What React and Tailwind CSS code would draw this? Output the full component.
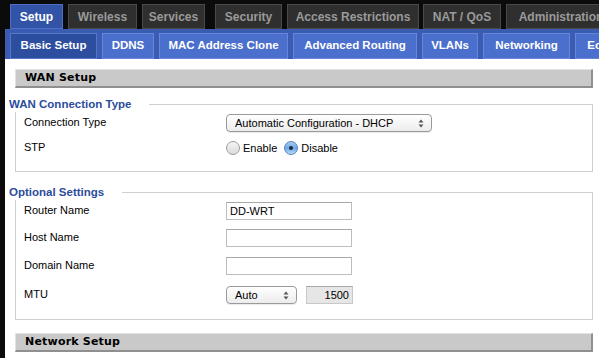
import React from 'react';

const mainTabs = [
  { label: 'Setup', w: 'w-[53px]', ml: 'ml-[10px]', active: true },
  { label: 'Wireless', w: 'w-[69px]', ml: 'ml-[5px]' },
  { label: 'Services', w: 'w-[63px]', ml: 'ml-[5px]' },
  { label: 'Security', w: 'w-[67px]', ml: 'ml-[10px]' },
  { label: 'Access Restrictions', w: 'w-[132px]', ml: 'ml-[5px]' },
  { label: 'NAT / QoS', w: 'w-[78px]', ml: 'ml-[4px]' },
  { label: 'Administration', w: 'w-[110px]', ml: 'ml-[5px]' },
];

const subTabs = [
  { label: 'Basic Setup', w: 'w-[87px]', active: true },
  { label: 'DDNS', w: 'w-[52px]' },
  { label: 'MAC Address Clone', w: 'w-[129px]' },
  { label: 'Advanced Routing', w: 'w-[124px]' },
  { label: 'VLANs', w: 'w-[56px]' },
  { label: 'Networking', w: 'w-[87px]' },
  { label: 'EoIP Tunnel', w: 'w-[90px]' },
];

const SectionHeader = ({ children }) => (
  <div className="h-[19px] bg-[#c9c9c9] border-t border-l border-[#e2e2e2] border-b-2 border-r-2 border-b-[#8f8f8f] border-r-[#8f8f8f] pl-[9px] flex items-center">
    <span className="font-['DejaVu_Sans'] font-bold text-[11px] tracking-[0.2px] text-black">{children}</span>
  </div>
);

const Fieldset = ({ legend, className, children }) => (
  <div className={`border border-[#cfcfcf] ${className}`}>
    <div className="-mt-[8px] -ml-[7px] w-fit bg-white pr-[18px] h-[15px] flex items-center">
      <span className="text-[11.5px] font-bold text-[#2b4c9c]">{legend}</span>
    </div>
    {children}
  </div>
);

const Row = ({ label, className, children }) => (
  <div className={`flex items-center h-[18px] pl-[8px] ${className}`}>
    <div className="w-[202px] text-[11px] text-black -mt-[2px]">{label}</div>
    {children}
  </div>
);

const SelectArrows = () => (
  <svg width="6" height="9" viewBox="0 0 6 9" className="shrink-0">
    <path d="M3 0.5 L5.5 3.5 H0.5 Z" fill="#555" />
    <path d="M3 8.5 L5.5 5.5 H0.5 Z" fill="#555" />
  </svg>
);

const MacSelect = ({ value, w }) => (
  <div className={`${w} h-[18px] rounded-[4px] border border-[#9a9a9a] bg-gradient-to-b from-white to-[#ececec] shadow-[0_1px_0_rgba(0,0,0,0.08)] flex items-center justify-between pl-[8px] pr-[7px]`}>
    <span className="text-[11px] text-black leading-none">{value}</span>
    <SelectArrows />
  </div>
);

const TextBox = ({ value, className = '' }) => (
  <div className={`h-[18px] border border-[#bdbdbd] border-t-[#a8a8a8] flex items-center text-[11px] text-black ${className}`}>
    {value}
  </div>
);

const Radio = ({ checked, label }) => (
  <div className="flex items-center gap-[3px]">
    {checked ? (
      <div className="w-[14px] h-[14px] rounded-full border border-[#5a7fb8] bg-gradient-to-b from-[#a9cdf3] via-[#6aa6e6] to-[#b9dbfa] flex items-center justify-center">
        <div className="w-[4px] h-[4px] rounded-full bg-[#1d2a3a]" />
      </div>
    ) : (
      <div className="w-[14px] h-[14px] rounded-full border border-[#9c9c9c] bg-gradient-to-b from-[#f4f4f4] to-[#dcdcdc]" />
    )}
    <span className="text-[11px] text-black">{label}</span>
  </div>
);

export default function App() {
  return (
    <div className="w-[599px] h-[358px] bg-[#0b0b0b] overflow-hidden font-['Liberation_Sans',sans-serif]">
      {/* main tabs */}
      <div className="flex pt-[4px] h-[29px] whitespace-nowrap">
        {mainTabs.map((t) => (
          <div
            key={t.label}
            className={`${t.w} ${t.ml} shrink-0 h-[25px] flex items-center justify-center text-[12px] font-bold border ${
              t.active
                ? 'bg-[#3253a6] border-[#4d6fc4] text-white'
                : 'bg-[#2f2f2f] border-[#4a4a4a] text-[#9a9a9a]'
            }`}
          >
            {t.label}
          </div>
        ))}
      </div>

      {/* sub tabs */}
      <div className="ml-[5px] h-[30px] bg-[#3a5db3] pt-[4px] pl-[5px] flex gap-[5px] whitespace-nowrap overflow-hidden">
        {subTabs.map((t) => (
          <div
            key={t.label}
            className={`${t.w} shrink-0 h-[26px] flex items-center justify-center text-[11.5px] font-bold text-white border ${
              t.active ? 'bg-[#2d4e9f] border-[#5676c8]' : 'bg-[#4b6fcc] border-[#6686d9]'
            }`}
          >
            {t.label}
          </div>
        ))}
      </div>

      {/* content */}
      <div className="ml-[5px] bg-white h-[299px] pt-[10px] pl-[10px] pr-[6px]">
        <SectionHeader>WAN Setup</SectionHeader>

        <Fieldset legend="WAN Connection Type" className="mt-[16px] pb-[14px]">
          <Row label="Connection Type" className="mt-[2px]">
            <MacSelect value="Automatic Configuration - DHCP" w="w-[206px]" />
          </Row>
          <Row label="STP" className="mt-[7px]">
            <div className="flex items-center gap-[7px]">
              <Radio label="Enable" />
              <Radio checked label="Disable" />
            </div>
          </Row>
        </Fieldset>

        <Fieldset legend="Optional Settings" className="mt-[20px] pb-[15px]">
          <Row label="Router Name" className="mt-[2px]">
            <TextBox value="DD-WRT" className="w-[126px] pl-[3px]" />
          </Row>
          <Row label="Host Name" className="mt-[9px]">
            <TextBox className="w-[126px]" />
          </Row>
          <Row label="Domain Name" className="mt-[10px]">
            <TextBox className="w-[126px]" />
          </Row>
          <Row label="MTU" className="mt-[11px]">
            <MacSelect value="Auto" w="w-[71px]" />
            <TextBox value="1500" className="ml-[9px] w-[47px] bg-[#e6e6e6] justify-end pr-[3px] border-[#c8c8c8]" />
          </Row>
        </Fieldset>

        <div className="mt-[13px]">
          <SectionHeader>Network Setup</SectionHeader>
        </div>
      </div>
    </div>
  );
}
